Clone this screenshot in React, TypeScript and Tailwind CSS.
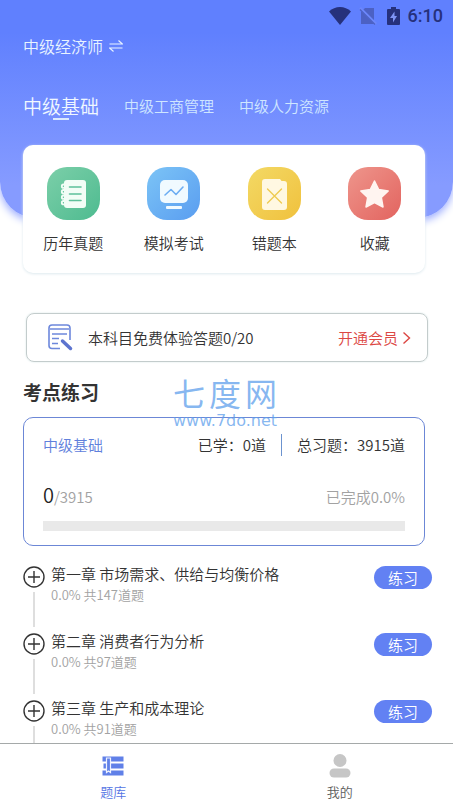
import React, { useState } from "react";

const subjects = ["中级基础", "中级工商管理", "中级人力资源"];

const chapters = [
  { id: "1", title: "第一章 市场需求、供给与均衡价格", percent: "0.0%", total: 147 },
  { id: "2", title: "第二章 消费者行为分析", percent: "0.0%", total: 97 },
  { id: "3", title: "第三章 生产和成本理论", percent: "0.0%", total: 91 },
];

const NotebookIcon = () => (
  <svg width="53" height="53" viewBox="0 0 53 53" fill="none">
    <rect x="17" y="13" width="22" height="28" rx="3" fill="#f3fdf6" />
    <path
      d="M19 17.500h-2.500a1.700 1.700 0 0 0 0 3.400M19 23h-2.500a1.700 1.700 0 0 0 0 3.400M19 28.500h-2.500a1.700 1.700 0 0 0 0 3.400M19 34h-2.500a1.700 1.700 0 0 0 0 3.400"
      stroke="#f3fdf6"
      strokeWidth="1.800"
      strokeLinecap="round"
    />
    <path d="M22.500 20h11.500M22.500 27h11.500M22.500 33.500h11.500" stroke="#5fc09a" strokeWidth="1.600" strokeLinecap="round" />
  </svg>
);

const MonitorIcon = () => (
  <svg width="53" height="53" viewBox="0 0 53 53" fill="none">
    <rect x="13" y="13" width="28" height="23" rx="5" fill="#f0faff" />
    <path d="M18 28l6-5.500 5 5 7-7.500" stroke="#6cadf2" strokeWidth="1.600" strokeLinecap="round" strokeLinejoin="round" />
    <rect x="19" y="39" width="16" height="3" rx="1" fill="#f0faff" />
  </svg>
);

const WrongIcon = () => (
  <svg width="53" height="53" viewBox="0 0 53 53" fill="none">
    <path d="M17 12h15l1.500 2H36a3 3 0 0 1 3 3V40a3 3 0 0 1-3 3H17a3 3 0 0 1-3-3V15a3 3 0 0 1 3-3z" fill="#fff8e2" />
    <path d="M19.500 22l14 14M33.500 22l-14 14" stroke="#eecb52" strokeWidth="1.400" strokeLinecap="round" />
  </svg>
);

const StarIcon = () => (
  <svg width="53" height="53" viewBox="0 0 53 53">
    <path
      d="M26.500 14l4.200 8.600 9.500 1.300-6.900 6.600 1.700 9.500-8.500-4.500-8.500 4.500 1.700-9.500-6.900-6.600 9.500-1.300z"
      fill="#fff4f0"
      stroke="#fff4f0"
      strokeWidth="1.500"
      strokeLinejoin="round"
    />
  </svg>
);

const shortcuts = [
  { label: "历年真题", color: "from-[#7bcfa9] to-[#4dbb90]", icon: <NotebookIcon /> },
  { label: "模拟考试", color: "from-[#7cc4f6] to-[#5a9df0]", icon: <MonitorIcon /> },
  { label: "错题本", color: "from-[#f3d964] to-[#f0c13c]", icon: <WrongIcon /> },
  { label: "收藏", color: "from-[#ee958c] to-[#e2635f]", icon: <StarIcon /> },
];

const StatusBar = () => (
  <div className="flex h-8 items-center justify-end px-2.5 text-[#26317c]">
    <svg width="22" height="18" viewBox="0 0 22 18" className="mr-2" fill="currentColor">
      <path d="M11 18L0 4.500C3 1.500 7 0 11 0s8 1.500 11 4.500z" />
    </svg>
    <svg width="18" height="18" viewBox="0 0 18 18" className="mr-2.5">
      <path d="M6 1h9v16H2V5z" fill="#4c61c4" />
      <path d="M1 1l16 16" stroke="#6d88fb" strokeWidth="2.500" />
      <path d="M1 2.500L16 17.500" stroke="#4c61c4" strokeWidth="1.200" />
    </svg>
    <svg width="13" height="18" viewBox="0 0 13 18" className="mr-2">
      <path d="M4 0h5v2h3a1 1 0 0 1 1 1v14a1 1 0 0 1-1 1H1a1 1 0 0 1-1-1V3a1 1 0 0 1 1-1h3z" fill="currentColor" />
      <path d="M7.500 4.500L3 11h3v4.500L10 9H7.500z" fill="#7f95f5" />
    </svg>
    <span className="font-['Roboto',sans-serif] text-lg font-medium">6:10</span>
  </div>
);

const Watermark = () => (
  <div className="pointer-events-none absolute top-[-41px] left-[149px] flex flex-col font-normal text-[#5f9fec]/75">
    <div className="flex gap-1 font-['Liberation_Sans','Noto_Sans_CJK_SC',sans-serif] text-[32px] leading-9">
      <span>七</span>
      <span>度</span>
      <span>网</span>
    </div>
    <span className="font-['DejaVu_Sans',sans-serif] text-base leading-4">www.7do.net</span>
  </div>
);

const App = () => {
  const [subject, setSubject] = useState(0);

  return (
    <div className="flex h-screen flex-col bg-white font-['Noto_Sans_CJK_SC',sans-serif] text-[15px] leading-5 font-[350] text-[#333]">
      <main className="flex-1 overflow-hidden">
        {/* header */}
        <header className="rounded-b-[36px] bg-linear-to-b from-[#6080fe] from-15% to-[#869bff] to-85% pb-24 shadow-[0_3px_8px_#9aabff]">
          <StatusBar />
          <button className="ml-[23px] flex items-center gap-1.5 py-0.5 text-base leading-6 text-[#e9f4ff]">
            中级经济师
            <svg width="14" height="14" viewBox="0 0 14 14" fill="none" stroke="currentColor" strokeWidth="1.200">
              <path d="M0.500 5h13L9.500 1.500M13.500 9h-13L4.500 12.500" />
            </svg>
          </button>
          <div className="mt-[30px] flex h-8 items-center gap-[25px] pl-[23px]">
            {subjects.map((item, index) => (
              <button
                key={item}
                onClick={() => setSubject(index)}
                className={
                  subject === index
                    ? "relative text-[19px] leading-8 text-[#f0f8ff]"
                    : "text-[15px] leading-8 text-[#cfe6ff]"
                }
              >
                {item}
                {subject === index && (
                  <span className="absolute bottom-0.5 left-1/2 h-0.5 w-4 -translate-x-1/2 bg-[#dceaff]" />
                )}
              </button>
            ))}
          </div>
        </header>

        {/* shortcuts */}
        <section className="relative mr-7 ml-[23px] -mt-[73px] grid grid-cols-4 rounded-[10px] bg-white pt-[22px] pb-5 shadow-[0_1px_3px_#dde9ee]">
          {shortcuts.map((item) => (
            <button key={item.label} className="flex flex-col items-center gap-[13px]">
              <span className={`rounded-[20px] bg-linear-to-br ${item.color}`}>{item.icon}</span>
              {item.label}
            </button>
          ))}
        </section>

        {/* member banner */}
        <section className="mt-10 mr-[25px] ml-[26px] flex h-[49px] items-center rounded-lg border border-[#c3cccc] pr-4 pl-5 shadow-[0_0_2px_#d5e5e5]">
          <svg width="26" height="28" viewBox="0 0 26 28" fill="none" stroke="#6d88dc" strokeWidth="1.600">
            <path d="M13 24.500H5a3 3 0 0 1-3-3V4a3 3 0 0 1 3-3h15a3 3 0 0 1 3 3v12" />
            <path d="M3 5h19M5 10h15M5 14.500h7M5 19.500h6" />
            <path d="M15.500 17l8 7.500" strokeWidth="3.500" stroke="#5d74cf" strokeLinecap="round" />
          </svg>
          <span className="ml-[15px] flex-1">本科目免费体验答题0/20</span>
          <a href="#member" className="flex items-center gap-1 text-[#dc4743]">
            开通会员
            <svg width="9" height="14" viewBox="0 0 9 14" fill="none" stroke="currentColor" strokeWidth="1.400">
              <path d="M1.500 1.500L7.500 7l-6 5.500" />
            </svg>
          </a>
        </section>

        <h2 className="mt-4 ml-[23px] text-[19px] leading-7 font-bold">考点练习</h2>

        {/* progress */}
        <section className="relative mt-[11px] mr-7 ml-[23px] rounded-[10px] border border-[#6c87d6] px-[19px] pt-4 pb-3.5">
          <div className="flex items-center">
            <span className="flex-1 text-[#6080dc]">中级基础</span>
            <span>已学：0道</span>
            <span className="mx-[15px] h-[22px] w-px bg-[#6c93cf]" />
            <span>总习题：3915道</span>
          </div>
          <div className="mt-[25px] flex items-baseline justify-between pb-3 text-[#a2a2a2]">
            <span>
              <span className="text-xl text-[#222]">0</span>/3915
            </span>
            <span>已完成0.0%</span>
          </div>
          <div className="h-2.5 bg-[#e9e9e9]" />
          <Watermark />
        </section>

        {/* chapters */}
        <ul className="mt-[18px] mr-[21px] ml-[23px]">
          {chapters.map((item) => (
            <li key={item.id} className="flex h-[67px]">
              <div className="flex w-[22px] flex-col items-center pt-0.5">
                <button aria-label={`展开${item.title}`}>
                  <svg width="22" height="22" viewBox="0 0 22 22" fill="none" stroke="#333" strokeWidth="1.400">
                    <circle cx="11" cy="11" r="10" />
                    <path d="M11 5v12M5 11h12" />
                  </svg>
                </button>
                <span className="mt-1 mb-1 w-0.5 flex-1 bg-[#dedede]" />
              </div>
              <div className="ml-1.5 flex-1">
                <p>{item.title}</p>
                <p className="mt-0.5 text-[13px] leading-[18px] text-[#a2a2a2]">
                  {item.percent} 共{item.total}道题
                </p>
              </div>
              <button className="mt-0.5 h-[23px] w-[58px] rounded-full bg-[#6281f3] text-white">
                练习
              </button>
            </li>
          ))}
        </ul>
      </main>

      {/* bottom tabs */}
      <nav className="relative flex h-16 border-t border-[#a5a9a9] bg-white text-[13px]">
        <a href="#bank" className="flex flex-1 flex-col items-center gap-1.5 pt-3 text-[#5575e4]">
          <svg width="22" height="20" viewBox="0 0 22 20" fill="#6080e8">
            <path d="M0.500 0.500h21v5h-21zM1.500 7.500h20v5h-20zM0.500 14.500h21v5h-21z" />
            <path d="M4.500 2h4v14.500l-2-1.500-2 1.500z" stroke="#eef2ff" strokeWidth="1.200" />
          </svg>
          题库
        </a>
        <a href="#mine" className="flex flex-1 flex-col items-center gap-1 pt-2.5 text-[#5c5c5c]">
          <svg width="22" height="24" viewBox="0 0 22 24" fill="#c6c6c6">
            <circle cx="11" cy="6.500" r="6.500" />
            <rect x="0.500" y="14.500" width="21" height="9" rx="4.500" />
          </svg>
          我的
        </a>
      </nav>
    </div>
  );
};

export default App;
